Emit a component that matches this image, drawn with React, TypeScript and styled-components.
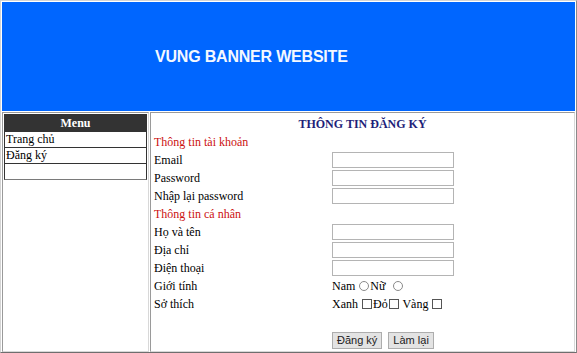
import React from "react";
import styled, { createGlobalStyle } from "styled-components";

const GlobalStyle = createGlobalStyle`
  html, body {
    margin: 0;
    padding: 0;
    background: #ffffff;
  }
  body {
    font-family: "Liberation Serif", "Times New Roman", serif;
    font-size: 12px;
    color: #000000;
  }
`;

const Frame = styled.div`
  box-sizing: border-box;
  width: 577px;
  height: 353px;
  padding: 1px;
  border: 1px solid;
  border-color: #d4d4d4 #8a8a8a #6e6e6e #d4d4d4;
  display: grid;
  grid-template-columns: 147px 1fr;
  grid-template-rows: 109px 1fr;
  gap: 1px;
`;

const Banner = styled.div`
  grid-column: 1 / span 2;
  background: #0066ff;
  display: flex;
  align-items: center;
  padding-left: 153px;
  font-family: "Liberation Sans", Arial, sans-serif;
  font-weight: bold;
  font-size: 16px;
  letter-spacing: -0.2px;
  color: #f4f8ff;
`;

const Cell = styled.div`
  box-sizing: border-box;
  border: 1px solid;
  border-color: #9a9a9a #d8d8d8 #d8d8d8 #9a9a9a;
`;

const SideCell = styled(Cell)`
  padding: 1px 1px 0;
`;

const Menu = styled.div`
  border: 1px solid #333333;
  border-bottom-color: #7a7a7a;
  display: flex;
  flex-direction: column;
`;

const MenuHead = styled.div`
  height: 16px;
  line-height: 16px;
  background: #333333;
  color: #ffffff;
  font-weight: bold;
  text-align: center;
`;

const MenuItem = styled.div`
  height: 15px;
  line-height: 15px;
  padding-left: 1px;
  border-top: 1px solid #333333;
`;

const MainCell = styled(Cell)`
  padding: 2px 3px;
`;

const FormGrid = styled.div`
  display: grid;
  grid-template-columns: 178px 1fr;
  grid-auto-rows: 18px;
  align-items: center;
`;

const Title = styled.div`
  grid-column: 1 / span 2;
  text-align: center;
  font-weight: bold;
  color: #1f1f7a;
`;

const Section = styled.div`
  grid-column: 1 / span 2;
  color: #cc1111;
`;

const Label = styled.div``;

const TextInput = styled.input`
  box-sizing: border-box;
  width: 122px;
  height: 16px;
  padding: 0 2px;
  border: 1px solid #b4b4b4;
  outline: none;
  font-size: 11px;
`;

const Choices = styled.div`
  display: flex;
  align-items: center;
  white-space: pre;
`;

const Radio = styled.input.attrs({ type: "radio" })`
  appearance: none;
  box-sizing: border-box;
  width: 10px;
  height: 10px;
  margin: 0 1px;
  border: 1px solid #8a8a8a;
  border-radius: 50%;
  background: #ffffff;
`;

const Check = styled.input.attrs({ type: "checkbox" })`
  appearance: none;
  box-sizing: border-box;
  width: 10px;
  height: 10px;
  margin: 0 1px;
  border: 1px solid #555555;
  background: #ffffff;
`;

const Buttons = styled.div`
  display: flex;
  gap: 6px;
`;

const Button = styled.button`
  box-sizing: border-box;
  height: 17px;
  padding: 0 4px;
  font-family: "Liberation Sans", Arial, sans-serif;
  font-size: 11px;
  color: #222222;
  background: #e3e3e3;
  border: 1px solid #adadad;
  border-radius: 0;
`;

const textFields = [
  { section: "Thông tin tài khoản", fields: ["Email", "Password", "Nhập lại password"] },
  { section: "Thông tin cá nhân", fields: ["Họ và tên", "Địa chỉ", "Điện thoại"] },
];

const App = () => (
  <>
    <GlobalStyle />
    <Frame>
      <Banner>VUNG BANNER WEBSITE</Banner>
      <SideCell>
        <Menu>
          <MenuHead>Menu</MenuHead>
          <MenuItem>Trang chủ</MenuItem>
          <MenuItem>Đăng ký</MenuItem>
          <MenuItem />
        </Menu>
      </SideCell>
      <MainCell>
        <FormGrid>
          <Title>THÔNG TIN ĐĂNG KÝ</Title>
          {textFields.map(group => (
            <React.Fragment key={group.section}>
              <Section>{group.section}</Section>
              {group.fields.map(f => (
                <React.Fragment key={f}>
                  <Label>{f}</Label>
                  <TextInput type={f.toLowerCase().includes("password") ? "password" : "text"} />
                </React.Fragment>
              ))}
            </React.Fragment>
          ))}
          <Label>Giới tính</Label>
          <Choices>
            Nam <Radio name="gt" />Nữ  <Radio name="gt" />
          </Choices>
          <Label>Sở thích</Label>
          <Choices>
            Xanh <Check />Đỏ<Check /> Vàng <Check />
          </Choices>
          <Label />
          <div />
          <Label />
          <Buttons>
            <Button>Đăng ký</Button>
            <Button>Làm lại</Button>
          </Buttons>
        </FormGrid>
      </MainCell>
    </Frame>
  </>
);

export default App;
